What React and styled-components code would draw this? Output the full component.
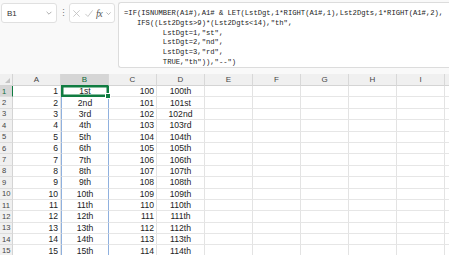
import React from "react";
import styled, { createGlobalStyle } from "styled-components";

const Global = createGlobalStyle`
  html, body { margin: 0; padding: 0; background: #fff; }
  body { width: 449px; height: 255px; overflow: hidden; font-family: "Liberation Sans", Arial, sans-serif; }
`;

const Page = styled.div`
  width: 449px;
  height: 255px;
  overflow: hidden;
  background: #f9f9f9;
  display: flex;
  flex-direction: column;
`;

const Toolbar = styled.div`
  display: flex;
  align-items: flex-start;
  padding: 2px 0 0 1px;
  height: 70px;
  box-sizing: border-box;
  flex: none;
`;

const NameBox = styled.div`
  width: 56px;
  height: 20px;
  box-sizing: border-box;
  background: #fff;
  border: 1px solid #e0e0e0;
  border-radius: 3px;
  display: flex;
  align-items: center;
  justify-content: space-between;
  padding: 0 3px 0 5px;
  font-size: 8px;
  color: #333;
  margin-top: 1px;
`;

const Dots = styled.div`
  width: 12px;
  height: 20px;
  margin: 1px 0 0 0;
  display: flex;
  align-items: center;
  justify-content: center;
  color: #777;
  font-size: 9px;
`;

const FuncBox = styled.div`
  width: 46px;
  height: 20px;
  box-sizing: border-box;
  margin-top: 1px;
  background: #fff;
  border: 1px solid #e0e0e0;
  border-radius: 3px;
  display: flex;
  align-items: center;
  justify-content: space-around;
  padding: 0 1px;
  color: #b5b5b5;
`;

const Fx = styled.span`
  font-family: "Liberation Serif", serif;
  font-style: italic;
  font-size: 10px;
  color: #555;
  letter-spacing: -0.5px;
`;

const FormulaBox = styled.div`
  margin-left: 3px;
  flex: 1;
  height: 66px;
  box-sizing: border-box;
  background: #fff;
  border: 1px solid #dcdcdc;
  border-right: none;
  border-radius: 3px 0 0 3px;
  padding: 6px 0 0 5px;
  font-family: "Liberation Mono", "DejaVu Sans Mono", monospace;
  font-size: 7.2px;
  line-height: 9.8px;
  color: #222;
  white-space: pre;
  overflow: hidden;
`;

const Sheet = styled.div`
  margin-top: 4px;
  display: grid;
  grid-template-columns: 13px repeat(9, 48px) 1fr;
  grid-template-rows: 12px;
  grid-auto-rows: 11.4px;
  background: #fff;
`;

const Corner = styled.div`
  background: #f0f0f0;
  border-right: 1px solid #d4d4d4;
  border-bottom: 1px solid #d4d4d4;
  box-sizing: border-box;
  position: relative;
  &::after {
    content: "";
    position: absolute;
    right: 2px;
    bottom: 2px;
    border-style: solid;
    border-width: 0 0 5px 5px;
    border-color: transparent transparent #c4c4c4 transparent;
  }
`;

const ColHead = styled.div`
  background: ${(p) => (p.$active ? "#d6d6d6" : "#f0f0f0")};
  border-right: 1px solid #d8d8d8;
  border-bottom: ${(p) => (p.$active ? "1px solid #107c41" : "1px solid #d4d4d4")};
  box-sizing: border-box;
  display: flex;
  align-items: center;
  justify-content: center;
  font-size: 8px;
  color: ${(p) => (p.$active ? "#0e6b38" : "#444")};
`;

const RowHead = styled.div`
  background: ${(p) => (p.$active ? "#d6d6d6" : "#f0f0f0")};
  border-right: ${(p) => (p.$active ? "1px solid #107c41" : "1px solid #d4d4d4")};
  border-bottom: 1px solid #dcdcdc;
  box-sizing: border-box;
  display: flex;
  align-items: center;
  padding-left: 2px;
  font-size: 7.6px;
  color: ${(p) => (p.$active ? "#0e6b38" : "#444")};
`;

const Cell = styled.div`
  position: relative;
  box-sizing: border-box;
  border-right: 1px solid ${(p) => (p.$spill ? "#8fb0de" : "#e3e3e3")};
  border-left: ${(p) => (p.$spill ? "1px solid #8fb0de" : "none")};
  border-bottom: 1px solid #e6e6e6;
  display: flex;
  align-items: center;
  justify-content: ${(p) => (p.$align === "right" ? "flex-end" : p.$align === "center" ? "center" : "flex-start")};
  padding: 0 2px;
  font-size: 8.6px;
  color: #222;
  white-space: nowrap;
  ${(p) =>
    p.$selected &&
    `
    box-shadow: inset 0 0 0 1.5px #107c41;
    border-color: #107c41;
    &::after {
      content: "";
      position: absolute;
      right: -3px;
      bottom: -3px;
      width: 4px;
      height: 4px;
      background: #107c41;
      border: 1px solid #fff;
      z-index: 2;
    }
  `}
`;

const Chevron = ({ size = 8, color = "#999" }) => (
  <svg width={size} height={size} viewBox="0 0 10 10">
    <path d="M2 3.5 L5 6.5 L8 3.5" fill="none" stroke={color} strokeWidth="1" />
  </svg>
);

const XIcon = () => (
  <svg width="9" height="9" viewBox="0 0 10 10">
    <path d="M1.5 1.5 L8.5 8.5 M8.5 1.5 L1.5 8.5" stroke="#bdbdbd" strokeWidth="0.9" fill="none" />
  </svg>
);

const CheckIcon = () => (
  <svg width="10" height="9" viewBox="0 0 10 10">
    <path d="M1 5.5 L3.8 8.3 L9 1.5" stroke="#bdbdbd" strokeWidth="0.9" fill="none" />
  </svg>
);

const formula = [
  '=IF(ISNUMBER(A1#),A1# & LET(LstDgt,1*RIGHT(A1#,1),Lst2Dgts,1*RIGHT(A1#,2),',
  '   IFS((Lst2Dgts>9)*(Lst2Dgts<14),"th",',
  '         LstDgt=1,"st",',
  '         LstDgt=2,"nd",',
  '         LstDgt=3,"rd",',
  '         TRUE,"th")),"--")',
].join("\n");

const cols = ["A", "B", "C", "D", "E", "F", "G", "H", "I", ""];

const ordinal = (n) => {
  const l2 = n % 100;
  const l = n % 10;
  let s = "th";
  if (!(l2 > 9 && l2 < 14)) {
    if (l === 1) s = "st";
    else if (l === 2) s = "nd";
    else if (l === 3) s = "rd";
  }
  return n + s;
};

const rows = Array.from({ length: 15 }, (_, i) => i + 1);

export default function App() {
  return (
    <>
      <Global />
      <Page>
        <Toolbar>
          <NameBox>
            <span>B1</span>
            <Chevron />
          </NameBox>
          <Dots>⋮</Dots>
          <FuncBox>
            <XIcon />
            <CheckIcon />
            <Fx>fx</Fx>
            <Chevron size={7} />
          </FuncBox>
          <FormulaBox>{formula}</FormulaBox>
        </Toolbar>
        <Sheet>
          <Corner />
          {cols.map((c, i) => (
            <ColHead key={i} $active={c === "B"}>
              {c}
            </ColHead>
          ))}
          {rows.map((r) => (
            <React.Fragment key={r}>
              <RowHead $active={r === 1}>{r}</RowHead>
              <Cell $align="right">{r}</Cell>
              <Cell $align="center" $spill $selected={r === 1}>
                {ordinal(r)}
              </Cell>
              <Cell $align="right">{99 + r}</Cell>
              <Cell $align="center">{ordinal(99 + r)}</Cell>
              <Cell />
              <Cell />
              <Cell />
              <Cell />
              <Cell />
              <Cell />
            </React.Fragment>
          ))}
        </Sheet>
      </Page>
    </>
  );
}
